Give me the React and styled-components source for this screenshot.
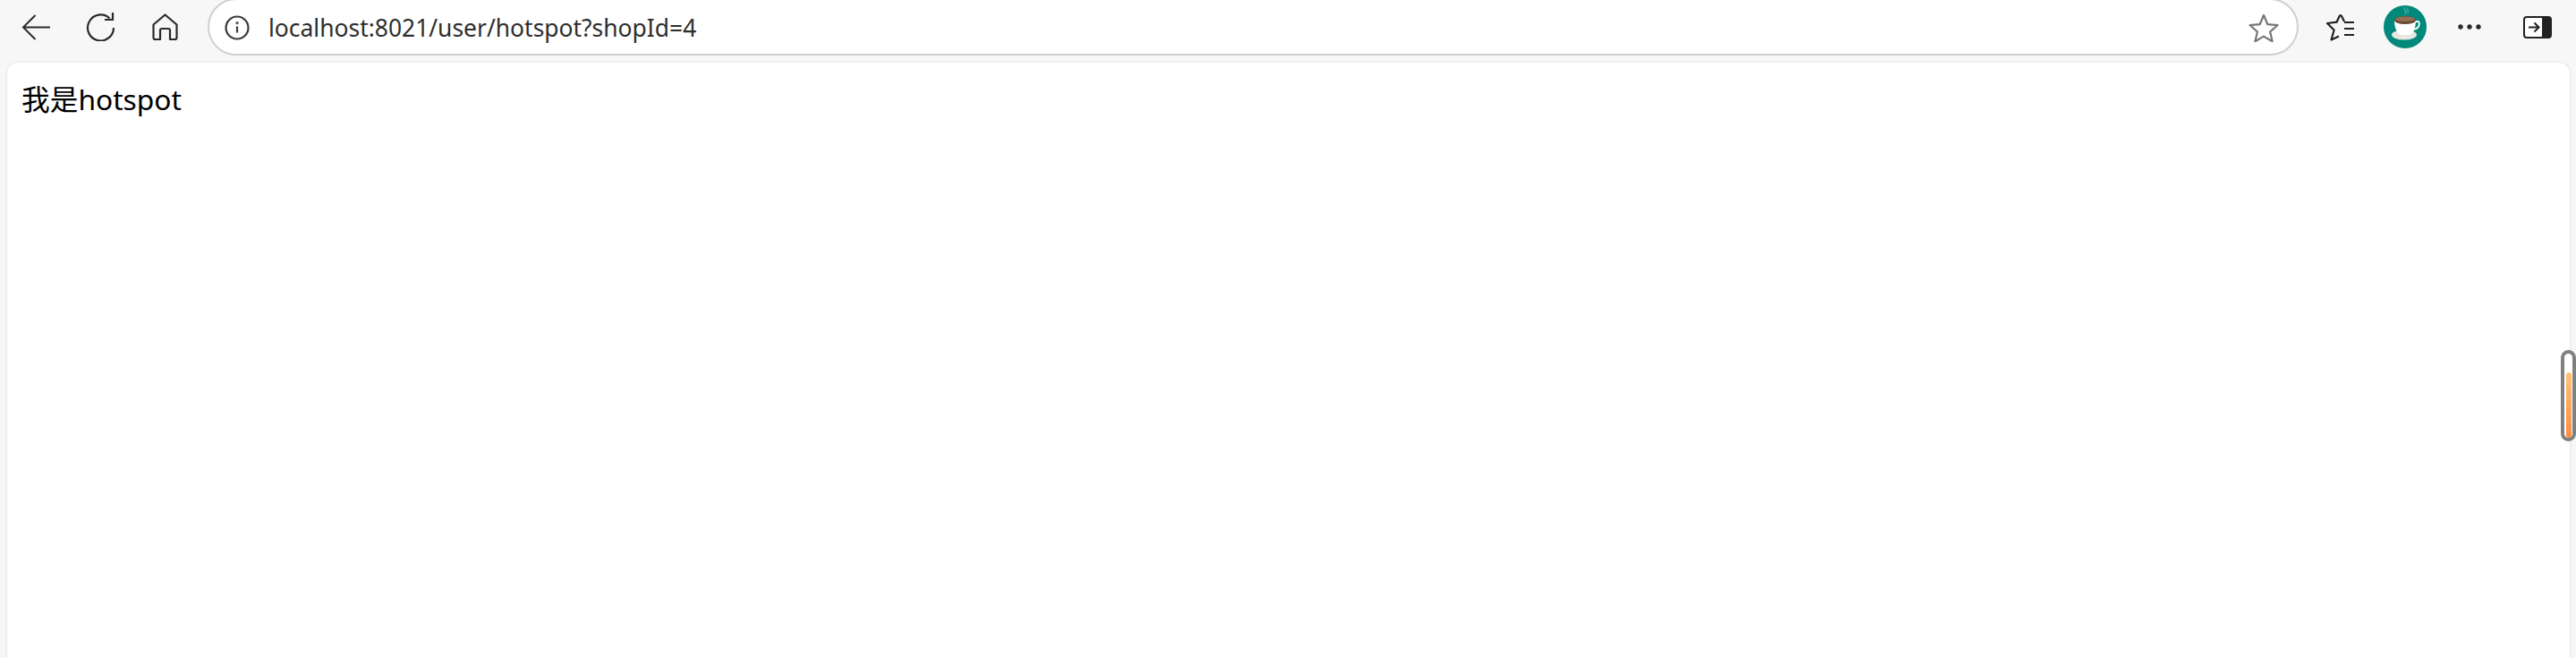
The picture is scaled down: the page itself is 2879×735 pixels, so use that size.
import React from 'react';
import styled, { createGlobalStyle } from 'styled-components';

const Global = createGlobalStyle`
  html, body { margin: 0; padding: 0; height: 100%; overflow: hidden; }
  body { font-family: "Noto Sans", "Noto Sans CJK SC", sans-serif; }
`;

const Window = styled.div`
  position: relative;
  width: 2879px;
  height: 735px;
  background: #f7f7f7;
  overflow: hidden;
  display: flex;
  flex-direction: column;
`;

const Toolbar = styled.div`
  height: 70px;
  flex: none;
  display: flex;
  align-items: flex-start;
`;

const NavGroup = styled.div`
  width: 232px;
  flex: none;
  height: 60px;
  display: grid;
  grid-template-columns: repeat(3, 72px);
  padding-left: 4px;
  box-sizing: border-box;
`;

const Slot = styled.div`
  display: flex;
  align-items: center;
  justify-content: center;
`;

const AddressBar = styled.div`
  width: 2337px;
  height: 64px;
  margin-top: -2px;
  flex: none;
  box-sizing: border-box;
  background: #fff;
  border: 2px solid #d0d0d0;
  border-radius: 32px;
  display: flex;
  align-items: center;
  padding: 2px 20px 0 17px;
`;

const Url = styled.span`
  margin-left: 21px;
  font-size: 26.45px;
  color: #2e2e2e;
  flex: 1;
  white-space: nowrap;
`;

const Actions = styled.div`
  flex: 1;
  height: 60px;
  display: grid;
  grid-template-columns: 72px 72px 72px 80px;
  padding-left: 11px;
`;

const Content = styled.div`
  flex: 1;
  margin: 0 7px 0 8px;
  background: #fff;
  border-radius: 12px 12px 0 0;
  box-shadow: 0 0 3px rgba(0, 0, 0, 0.14);
  padding: 19px 16px;
  font-size: 31.7px;
  line-height: 44px;
  color: #000;
`;

const ScrollThumb = styled.div`
  position: absolute;
  left: 2862px;
  top: 391px;
  width: 17px;
  height: 102px;
  box-sizing: border-box;
  border: 4px solid #808080;
  border-radius: 9px;
  background: #fff;
  padding: 21px 1.5px 0;
  display: flex;
`;

const ThumbFill = styled.div`
  flex: 1;
  border-radius: 3px;
  background: linear-gradient(#ffc27a, #ff8a3c);
`;

const Icon = styled.svg`
  display: block;
  flex: none;
`;

const BackIcon = () => (
  <Icon width="32" height="29" viewBox="0 0 32 29" fill="none" stroke="#2a2a2a" strokeWidth="2">
    <path d="M32 14.500H2M15.500 1 2 14.500 15.500 28" />
  </Icon>
);

const ReloadIcon = () => (
  <Icon width="33" height="32" viewBox="0 0 33 32" fill="none" stroke="#2a2a2a" strokeWidth="2.200">
    <path d="M26.500 6.500A14.500 14.500 0 1 0 31 17" />
    <path d="M30 0v8h-9" />
  </Icon>
);

const HomeIcon = () => (
  <Icon width="29" height="31" viewBox="0 0 29 31" fill="none" stroke="#2a2a2a" strokeWidth="2.200" strokeLinejoin="round">
    <path d="M1.500 12.500 14.500 1.500l13 11V27a2 2 0 0 1-2 2H20V19a2 2 0 0 0-2-2h-7a2 2 0 0 0-2 2v10H3.500a2 2 0 0 1-2-2z" />
  </Icon>
);

const InfoIcon = () => (
  <Icon width="28" height="28" viewBox="0 0 28 28" fill="none" stroke="#3c3c3c" strokeWidth="2.200">
    <circle cx="14" cy="14" r="12.500" />
    <path d="M14 12.500v7" />
    <circle cx="14" cy="8.600" r="0.600" />
  </Icon>
);

const StarIcon = () => (
  <Icon width="34" height="32" viewBox="0 0 34 32" fill="none" stroke="#777" strokeWidth="2.200" strokeLinejoin="round">
    <path d="M17 2l4.400 10.200 11 1-8.300 7.300 2.500 10.800L17 25.600 7.400 31.300l2.500-10.800L1.600 13.200l11-1z" />
  </Icon>
);

const FavoritesIcon = () => (
  <Icon width="34" height="32" viewBox="0 0 34 32" fill="none" stroke="#222" strokeWidth="2.200" strokeLinejoin="round">
    <path d="M21 10l-3-6c-.6-1.300-1.800-1.300-2.400 0l-3 6.700L2 12l7.600 7.500L6.500 30.500l8.500-4" />
    <path d="M21 11h11M21 18h11M21 25h11" />
  </Icon>
);

const CoffeeAvatar = () => (
  <Icon width="48" height="48" viewBox="0 0 48 48">
    <circle cx="24" cy="24" r="24" fill="#00897b" />
    <path d="M24 2c-3 3 3 4 0 8M27 3c-2 2 2 3 0 6" fill="none" stroke="#3fa99c" strokeWidth="1.500" />
    <ellipse cx="23" cy="33" rx="14" ry="5.500" fill="#e8e6e3" />
    <path d="M12 16h24c0 8-2 15-7 17H19c-5-2-7-9-7-17z" fill="#fff" />
    <path d="M35 18h3c3 0 3 7-4 9" fill="none" stroke="#fff" strokeWidth="1.800" />
    <ellipse cx="24" cy="16.500" rx="12" ry="4.500" fill="#6b4a35" />
    <ellipse cx="24" cy="15.200" rx="11" ry="2.800" fill="#c9a989" opacity="0.400" />
  </Icon>
);

const MoreIcon = () => (
  <Icon width="28" height="8" viewBox="0 0 28 8" fill="#2a2a2a">
    <circle cx="4" cy="4" r="2.700" />
    <circle cx="14" cy="4" r="2.700" />
    <circle cx="24" cy="4" r="2.700" />
  </Icon>
);

const SidebarIcon = () => (
  <Icon width="32" height="25" viewBox="0 0 32 25">
    <rect x="1" y="1" width="30" height="23" rx="3" fill="#fff" stroke="#222" strokeWidth="2" />
    <path d="M21 1h7a3 3 0 0 1 3 3v17a3 3 0 0 1-3 3h-7z" fill="#222" />
    <path d="M6 12.500h11M12.500 7.500l5 5-5 5" fill="none" stroke="#222" strokeWidth="2" />
  </Icon>
);

const App = () => (
  <>
    <Global />
    <Window>
      <Toolbar>
        <NavGroup>
          <Slot><BackIcon /></Slot>
          <Slot><ReloadIcon /></Slot>
          <Slot><HomeIcon /></Slot>
        </NavGroup>
        <AddressBar>
          <InfoIcon />
          <Url>localhost:8021/user/hotspot?shopId=4</Url>
          <StarIcon />
        </AddressBar>
        <Actions>
          <Slot><FavoritesIcon /></Slot>
          <Slot><CoffeeAvatar /></Slot>
          <Slot><MoreIcon /></Slot>
          <Slot><SidebarIcon /></Slot>
        </Actions>
      </Toolbar>
      <Content>我是hotspot</Content>
      <ScrollThumb>
        <ThumbFill />
      </ScrollThumb>
    </Window>
  </>
);

export default App;
